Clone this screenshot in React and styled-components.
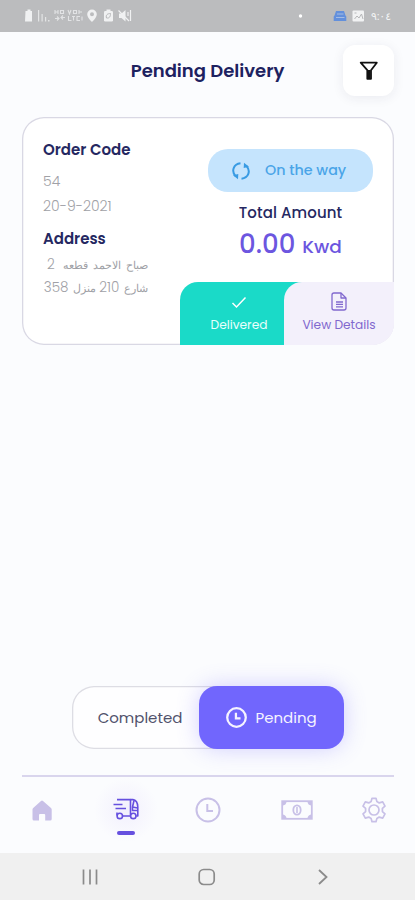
import React from 'react'
import styled, { createGlobalStyle } from 'styled-components'

function App() {
  return (
    <Screen>
      <GlobalStyle />
      <StatusBar>
        <StatusLeft />
        <StatusRight />
        <Time>٩:٠٤</Time>
      </StatusBar>
      <Header>
        <Title>Pending Delivery</Title>
        <FilterButton aria-label="Filter">
          <FilterIcon />
        </FilterButton>
      </Header>

      <OrderCard>
        <OrderInfo>
          <Label>Order Code</Label>
          <Value $top="7px">54</Value>
          <Value $top="0">20-9-2021</Value>
          <Label $top="7px">Address</Label>
          <Address>
            <AddressLine $size="11.4px" $words="2px">صباح الاحمد قطعه <Num $gap="3px">2</Num></AddressLine>
            <AddressLine $size="11.1px">شارع <Num>210</Num> منزل <Num>358</Num></AddressLine>
          </Address>
        </OrderInfo>
        <OrderSide>
          <Status>
            <SyncIcon />
            <span>On the way</span>
          </Status>
          <Total>Total Amount</Total>
          <Amount>
            <strong>0.00</strong>
            <span>Kwd</span>
          </Amount>
        </OrderSide>
        <Actions>
          <Delivered>
            <CheckIcon />
            <span>Delivered</span>
          </Delivered>
          <Details>
            <FileIcon />
            <span>View Details</span>
          </Details>
        </Actions>
      </OrderCard>

      <Spacer />

      <Toggle>
        <Completed>Completed</Completed>
        <Pending>
          <ClockIcon size={21} stroke={2.8} />
          <span>Pending</span>
        </Pending>
      </Toggle>

      <TabBar>
        <Tab><HomeIcon /></Tab>
        <Tab $active><TruckIcon /></Tab>
        <Tab><ClockIcon size={26} stroke={2} /></Tab>
        <Tab><MoneyIcon /></Tab>
        <Tab><GearIcon /></Tab>
      </TabBar>
      <SystemNav>
        <svg width="18" height="18" viewBox="0 0 18 18" stroke="#8b8b8b" strokeWidth="1.7">
          <path d="M2.500 1.5v15M9 1.5v15M15.500 1.5v15" />
        </svg>
        <svg width="18" height="18" viewBox="0 0 18 18" fill="none" stroke="#8b8b8b" strokeWidth="1.7">
          <rect x="1.2" y="1.5" width="15" height="15" rx="4.5" />
        </svg>
        <svg width="18" height="18" viewBox="0 0 18 18" fill="none" stroke="#8b8b8b" strokeWidth="1.8">
          <path d="M5 2l7.5 7L5 16" />
        </svg>
      </SystemNav>
    </Screen>
  )
}

export default App

const StatusLeft = () => (
  <svg width="110" height="18" viewBox="0 0 110 18" fill="#f0f1f2">
    <path d="M3.5 4h2V2.500h3V4h1.500v10.500H3z" />
    <path d="M16 3h1.200v11.500H16zM19.500 7h1.200v7.500h-1.200zM23 10h1.200v4.500H23zM26 13h1.500v1.500H26z" opacity=".75" />
    <g fill="none" stroke="#f0f1f2" strokeWidth="1.100" opacity=".75">
      <path d="M33 3v4M33 5h3M36 3v4M38.500 3.500h3v3h-3zM33 11.500h3.500M35 9.500l2 2-2 2M43 10.500h-3.500M41 8.500l-2 2 2 2" />
      <path d="M46 3l1.500 4L49 3M51.500 3.500h3v3h-3zM57 3v4M57 5h3M46.500 9v4.500h3M50 9.500h3M51.500 9.500v4M58 9.500h-3v4h3M60 9.500v4" />
    </g>
    <path d="M70 2.500a4.800 4.800 0 0 0-4.800 4.800c0 3.600 4.800 7.700 4.800 7.700s4.800-4.100 4.800-7.700A4.800 4.800 0 0 0 70 2.500zm0 6.700a2 2 0 1 1 0-4 2 2 0 0 1 0 4z" fillRule="evenodd" />
    <rect x="82" y="4" width="9" height="10.500" rx="1.200" />
    <path d="M84.500 2.500h4V4h-4z" />
    <path d="M84.500 11c-1-3 1-4.500 4-4.500 0 3-1 5-4 4.500z" fill="none" stroke="#b7b8ba" />
    <path d="M97 6.500h2.500L103.500 3v11.500l-4-3.500H97z" />
    <path d="M96.500 3.500l10.500 10.500M106 5v4M108.500 3v11" stroke="#f0f1f2" strokeWidth="1.200" />
  </svg>
)

const StatusRight = () => (
  <svg width="72" height="18" viewBox="0 0 72 18">
    <circle cx="5.500" cy="9" r="1.700" fill="#fff" />
    <path d="M41 4h8l1.500 4.500.8 1v4.500H38.700V9.500l.8-1z" fill="#6390dc" />
    <path d="M42 7h6.500M41 10.500h8.500" stroke="#a5bce3" strokeWidth="1" />
    <rect x="57.500" y="3.500" width="11.500" height="11" rx="1" fill="#f1f2f3" />
    <path d="M59.500 12l2.500-3 2 2 2.500-4 1.500 5M59.500 6h2" stroke="#b6b7b9" strokeWidth="1" fill="none" />
  </svg>
)

const FilterIcon = () => (
  <svg width="20" height="20" viewBox="0 0 20 20" fill="none" stroke="#111" strokeWidth="1.8" strokeLinejoin="round">
    <path d="M1.700 1.700h16.100L12 9.200v8.600H8.300V9.200z" />
    <path d="M9 9h2.500v8.500H9z" fill="#111" stroke="none" />
  </svg>
)

const SyncIcon = () => (
  <svg width="20" height="20" viewBox="0 0 20 20" fill="none" stroke="#399be3" strokeWidth="2">
    <path d="M9.500 2.300C2.500 3 0 10 4.600 15.200M10.500 17.700C17.500 17 20 10 15.400 4.800" />
    <path d="M2 14.200l5.300-1.200-.3 5.300zM18 5.800l-5.300 1.200.3-5.300z" fill="#399be3" stroke="none" />
  </svg>
)

const CheckIcon = () => (
  <svg width="16" height="13" viewBox="0 0 16 13" fill="none" stroke="#fff" strokeWidth="1.500">
    <path d="M1.500 7l4 4L14.500 1.500" />
  </svg>
)

const FileIcon = () => (
  <svg width="16" height="19" viewBox="0 0 16 19" fill="none" stroke="#8168ce" strokeWidth="1.300" strokeLinejoin="round">
    <path d="M10 1H3a2 2 0 0 0-2 2v13a2 2 0 0 0 2 2h10a2 2 0 0 0 2-2V6z" />
    <path d="M10 1v5h5M5 10h7M5 12.400h7M5 14.800h7" />
  </svg>
)

const ClockIcon = ({ size, stroke }) => (
  <svg width={size} height={size} viewBox="0 0 26 26" fill="none" stroke="currentColor" strokeWidth={stroke}>
    <circle cx="13" cy="13" r="11.500" />
    <path d="M12.300 7v7h5.700" />
  </svg>
)

const HomeIcon = () => (
  <svg width="20" height="21" viewBox="0 0 20 21" fill="currentColor">
    <path d="M9 1a1.500 1.500 0 0 1 2 0l8 7q.700.700.700 1.600V19q0 1.500-1.500 1.500h-5V15q0-1-1-1H8q-1 0-1 1v5.500H2Q.500 20.500.500 19V9.600q0-.900.700-1.600z" />
  </svg>
)

const TruckIcon = () => (
  <svg width="26" height="22" viewBox="0 0 26 22" fill="none" stroke="currentColor" strokeWidth="1.600" strokeLinejoin="round">
    <path d="M4 1.600h13.500V17M.5 6.500h9M2.500 10.500h10.500M4 14.500v3M9.700 18h8" />
    <path d="M17.500 1.600h2.500c2.800 0 4.800 3.400 4.800 7.400v9h-1.500M21 2.500l-1.500 6.500L24.500 10M19.500 9v3.500h5" />
    <circle cx="6.800" cy="17.900" r="2.700" />
    <circle cx="20.300" cy="17.900" r="2.700" />
  </svg>
)

const MoneyIcon = () => (
  <svg width="32" height="20" viewBox="0 0 32 20" fill="none" stroke="currentColor" strokeWidth="1.800">
    <rect x="1.200" y="1.200" width="29.600" height="17.600" />
    <path d="M2 2h3.500q-.5 3-3.500 3.500zM30 2h-3.500q.5 3 3.500 3.500zM2 18h3.500q-.5-3-3.500-3.500zM30 18h-3.500q.5-3 3.500-3.500z" fill="currentColor" stroke="none" />
    <ellipse cx="16" cy="10" rx="3.700" ry="4.700" />
    <path d="M16 7v6" strokeWidth="1.600" />
  </svg>
)

const GearIcon = () => (
  <svg width="26" height="26" viewBox="0 0 26 26" fill="none" stroke="currentColor" strokeWidth="1.700" strokeLinejoin="round">
    <path d="M11 1.300h4l.900 3.300 2.300 1.300 3.500-1 2.300 4.200-2.600 2.300v3.200l2.600 2.300-2.300 4.200-3.500-1-2.300 1.300-.900 3.300h-4l-.900-3.300-2.300-1.300-3.500 1L2 16.900l2.600-2.300v-3.200L2 9.100l2.300-4.200 3.500 1 2.300-1.300z" />
    <circle cx="13" cy="13" r="5" />
  </svg>
)

const GlobalStyle = createGlobalStyle`
* {
    box-sizing: border-box;
}
body {
    margin: 0;
    font-family: Poppins, Inter, "DejaVu Sans", sans-serif;
}
button {
    font: inherit;
    border: 0;
    padding: 0;
}
svg {
    display: block;
    flex: none;
}
`
const Screen = styled.div`
    display: flex;
    flex-direction: column;
    width: 415px;
    height: 900px;
    background: #fbfcfe;
    overflow: hidden;
`
const StatusBar = styled.div`
    display: flex;
    align-items: center;
    height: 32px;
    padding-left: 22px;
    background: #bbbcbe;

    > svg:nth-child(2) {
        margin-left: 163px;
    }
`
const Time = styled.span`
    margin-left: 4px;
    color: #f2f3f4;
    font-size: 11px;
    line-height: 16px;
`
const Header = styled.header`
    display: grid;
    grid-template-columns: 51px 1fr 51px;
    align-items: center;
    height: 51px;
    margin: 13px 21px 0;
`
const Title = styled.h1`
    grid-column: 2;
    margin: 0;
    text-align: center;
    color: #1d2260;
    font-size: 18px;
    font-weight: 600;
    white-space: nowrap;
`
const FilterButton = styled.button`
    display: grid;
    place-items: center;
    height: 51px;
    border-radius: 12px;
    background: #fff;
    box-shadow: 0 2px 12px rgba(40, 40, 80, 0.08);
`
const OrderCard = styled.section`
    display: grid;
    grid-template-columns: 157px 1fr;
    grid-template-rows: 165px 63px;
    width: 372px;
    height: 228px;
    margin: 21px 0 0 22px;
    border-radius: 22px;
    background: #fff;
    box-shadow: inset 0 0 0 1.300px #d9d8e4;
    overflow: hidden;
`
const OrderInfo = styled.div`
    grid-row: 1 / 3;
    padding: 20px 0 0 21px;
`
const Label = styled.h2`
    margin: ${p => p.$top || 0} 0 0;
    color: #252861;
    font-size: 15px;
    font-weight: 600;
    line-height: 25px;
    white-space: nowrap;
`
const Value = styled.p`
    margin: ${p => p.$top} 0 0;
    color: #a0a1a6;
    font-size: 14px;
    font-weight: 300;
    line-height: 25px;
`
const Address = styled.div`
    width: 105px;
    padding-top: 3px;
    direction: rtl;
`
const AddressLine = styled.p`
    margin: 0;
    color: #a0a1a6;
    font-size: ${p => p.$size};
    font-weight: 300;
    line-height: 22.500px;
    word-spacing: ${p => p.$words || 0};
    white-space: nowrap;
`
const Num = styled.span`
    margin-right: ${p => p.$gap || '1.7px'};
    font-size: 13.500px;
    line-height: 20px;
`
const OrderSide = styled.div`
    display: flex;
    flex-direction: column;
    align-items: center;
    padding: 32px 21px 0 29px;
`
const Status = styled.div`
    display: flex;
    align-items: center;
    gap: 14px;
    width: 165px;
    height: 43px;
    padding-left: 23px;
    border-radius: 20px;
    background: #c5e4fd;
    color: #4aa4e8;
    font-size: 14.300px;
    font-weight: 500;
`
const Total = styled.div`
    margin-top: 11px;
    color: #252861;
    font-size: 15px;
    font-weight: 500;
    line-height: 20px;
    letter-spacing: 0.1px;
    white-space: nowrap;
`
const Amount = styled.div`
    display: flex;
    align-items: baseline;
    gap: 7px;
    margin-top: 6px;
    color: #6c56e0;
    font-size: 18.500px;
    font-weight: 500;
    line-height: 30px;

    strong {
        font-size: 26px;
        font-weight: 500;
    }
`
const Actions = styled.div`
    display: grid;
    grid-template-columns: 104px 110px;
    grid-column: 2;
    margin-left: 1px;
    background: linear-gradient(to right, #1adac8 130px, #f3f0fb 130px);
    border-top-left-radius: 18px;
`
const Action = styled.button`
    display: flex;
    flex-direction: column;
    align-items: center;
    font-size: 12.200px;
    line-height: 18px;
    white-space: nowrap;
`
const Delivered = styled(Action)`
    gap: 7px;
    padding: 14px 0 0 14px;
    background: transparent;
    color: #e9fffc;
`
const Details = styled(Action)`
    gap: 5px;
    padding-top: 10px;
    border-top-left-radius: 18px;
    background: #f3f0fb;
    color: #8168ce;
`
const Spacer = styled.div`
    flex: 1;
`
const Toggle = styled.div`
    display: flex;
    width: 272px;
    height: 63px;
    margin: 0 0 26px 72px;
    border-radius: 22px;
    background: #fefeff;
    box-shadow: inset 0 0 0 1.300px #dddde4;
`
const Completed = styled.button`
    width: 127px;
    padding-left: 9px;
    background: transparent;
    color: #51526c;
    font-size: 15px;
`
const Pending = styled.button`
    display: flex;
    align-items: center;
    gap: 9px;
    width: 145px;
    padding-left: 26.500px;
    border-radius: 18px;
    background: #7166fd;
    box-shadow: 0 0 22px rgba(113, 102, 253, 0.3);
    color: #f5f3ff;
    font-size: 15px;
`
const TabBar = styled.nav`
    display: grid;
    grid-template-columns: 84px 82px 89px 77px 40px;
    height: 78px;
    margin: 0 21px 0 22px;
    border-top: 2px solid #d9d5ed;
`
const Tab = styled.div`
    display: flex;
    flex-direction: column;
    align-items: center;
    justify-content: center;
    width: 40px;
    height: 66px;
    color: ${p => (p.$active ? '#6650df' : '#c8c0e7')};

    ${p => p.$active && `
    width: 64px;
    margin-left: -12px;
    padding-top: 13px;
    background: radial-gradient(circle closest-side, #f2f0fd, #fbfcfe);

    &::after {
        content: "";
        width: 18px;
        height: 4px;
        margin-top: 11px;
        border-radius: 2px;
        background: #6650df;
    }
    `}
`
const SystemNav = styled.div`
    display: flex;
    justify-content: space-between;
    align-items: center;
    height: 47px;
    padding: 0 83px 0 81px;
    background: #f0f0f0;
`
